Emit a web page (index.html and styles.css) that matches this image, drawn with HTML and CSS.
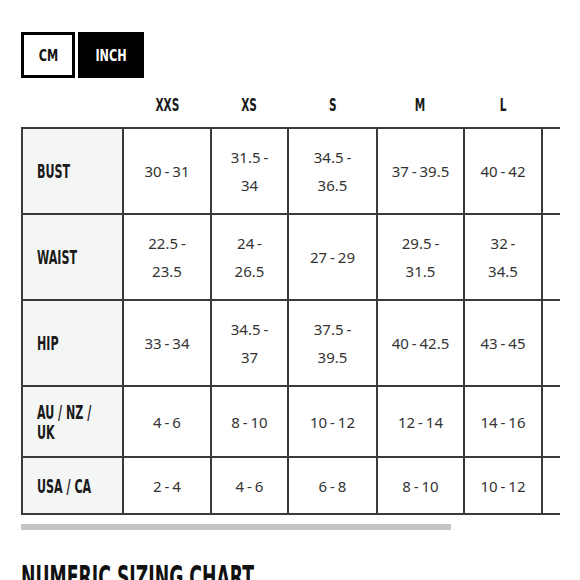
FILE: index.html
```html
<!DOCTYPE html>
<html>
<head>
<meta charset="utf-8">
<link rel="stylesheet" href="styles.css">
</head>
<body>
<div class="page">
  <div class="units">
    <button class="unit"><span class="cond">CM</span></button>
    <button class="unit unit-active"><span class="cond">INCH</span></button>
  </div>
  <div class="scroller">
    <table class="chart">
      <colgroup>
        <col class="c-label"><col class="c-xxs"><col class="c-xs"><col class="c-s"><col class="c-m"><col class="c-l"><col class="c-xl"><col class="c-xxl">
      </colgroup>
      <thead>
        <tr>
          <th></th><th><span class="cond">XXS</span></th><th><span class="cond">XS</span></th><th><span class="cond">S</span></th><th><span class="cond">M</span></th><th><span class="cond">L</span></th><th><span class="cond">XL</span></th><th><span class="cond">XXL</span></th>
        </tr>
      </thead>
      <tbody>
        <tr class="tall">
          <th><span class="cond">BUST</span></th><td>30 - 31</td><td>31.5 -<br>34</td><td>34.5 -<br>36.5</td><td>37 - 39.5</td><td>40 - 42</td><td>43 - 45</td><td>46 - 48</td>
        </tr>
        <tr class="tall">
          <th><span class="cond">WAIST</span></th><td>22.5 -<br>23.5</td><td>24 -<br>26.5</td><td>27 - 29</td><td>29.5 -<br>31.5</td><td>32 -<br>34.5</td><td>35 -<br>37.5</td><td>38 -<br>40.5</td>
        </tr>
        <tr class="tall">
          <th><span class="cond">HIP</span></th><td>33 - 34</td><td>34.5 -<br>37</td><td>37.5 -<br>39.5</td><td>40 - 42.5</td><td>43 - 45</td><td>46 - 48</td><td>49 - 51</td>
        </tr>
        <tr class="mid">
          <th><span class="cond">AU / NZ /</span><br><span class="cond">UK</span></th><td>4 - 6</td><td>8 - 10</td><td>10 - 12</td><td>12 - 14</td><td>14 - 16</td><td>16 - 18</td><td>18 - 20</td>
        </tr>
        <tr class="short">
          <th><span class="cond">USA / CA</span></th><td>2 - 4</td><td>4 - 6</td><td>6 - 8</td><td>8 - 10</td><td>10 - 12</td><td>12 - 14</td><td>14 - 16</td>
        </tr>
      </tbody>
    </table>
  </div>
  <div class="scrollbar"><div class="scrollbar-thumb"></div></div>
  <h2 class="title"><span class="cond">NUMERIC SIZING CHART</span></h2>
</div>
</body>
</html>
```
FILE: styles.css
```css
* { box-sizing: border-box; }
html, body { margin: 0; padding: 0; background: #fff; }
body { font-family: "Noto Sans", "Open Sans", sans-serif; color: #333; overflow: hidden; }

.page { padding: 32px 20px 0 21px; }

.cond {
  display: inline-block;
  white-space: nowrap;
  font-family: "DejaVu Sans Condensed", "DejaVu Sans", sans-serif;
  font-weight: 700;
}

.units { display: flex; gap: 3px; }
.unit {
  font-family: "DejaVu Sans Condensed", "DejaVu Sans", sans-serif;
  font-weight: 700;
  font-size: 16px;
  height: 46px;
  border: 3px solid #000;
  background: #fff;
  color: #111;
  padding: 0;
  margin: 0;
  width: 54px;
  display: flex; align-items: center; justify-content: center;
}
.unit .cond { transform: scaleX(0.78); }
.unit-active { width: 66px; background: #000; color: #fff; }

.scroller {
  overflow: hidden;
  margin-top: 2px;
}

.chart {
  border-collapse: collapse;
  table-layout: fixed;
  width: 698px;
}
.c-label { width: 101px; }
.c-xxs { width: 88px; }
.c-xs { width: 77px; }
.c-s { width: 89px; }
.c-m { width: 87px; }
.c-l { width: 78px; }
.c-xl { width: 100px; }
.c-xxl { width: 78px; }

.chart thead th {
  font-size: 18px;
  color: #1a1a1a;
  height: 48px;
  padding: 0;
  text-align: center;
  border: none;
}
.chart thead th .cond { transform: scaleX(0.65); }

.chart tbody th,
.chart tbody td { border: 2px solid #3a3a3a; }

.chart tbody th {
  background: #f4f5f5;
  text-align: left;
  padding: 0 6px 0 14px;
  font-size: 19px;
  line-height: 20px;
  color: #1a1a1a;
}
.chart tbody th .cond { transform: scaleX(0.65); transform-origin: left center; }

.chart tbody td {
  text-align: center;
  font-size: 15px;
  line-height: 28px;
  word-spacing: -1px;
  padding: 0 4px;
  color: #333;
  white-space: nowrap;
}
.chart tr.tall { height: 86px; }
.chart tr.mid { height: 71px; }
.chart tr.short { height: 57px; }

.scrollbar {
  margin-top: 9px;
  height: 6px;
  width: 539px;
}
.scrollbar-thumb {
  width: 430px;
  height: 6px;
  background: #c4c4c4;
}

.title {
  margin: 30px 0 0;
  font-size: 32px;
  color: #111;
  line-height: 1;
}
.title .cond { transform: scaleX(0.6); transform-origin: left center; }
```
